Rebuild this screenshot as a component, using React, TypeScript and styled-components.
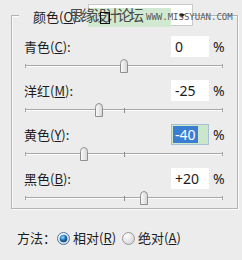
import React from 'react';
import styled, { createGlobalStyle } from 'styled-components';

const Global = createGlobalStyle`
  html, body { margin: 0; padding: 0; background: #ececec; }
  body {
    font-family: "Noto Sans CJK SC", "Noto Sans", sans-serif;
    font-size: 13px;
    color: #1c1c1c;
  }
`;

const Dialog = styled.div`
  position: relative;
  width: 242px;
  height: 260px;
  box-sizing: border-box;
  padding: 15px 4px 0 11px;
  background: #ececec;
  overflow: hidden;
`;

const GroupBox = styled.div`
  position: relative;
  width: 227px;
  height: 194px;
  box-sizing: border-box;
  border: 1px solid #b4b4b4;
  box-shadow: inset 1px 1px 0 #fbfbfb, 1px 1px 0 #fbfbfb;
  padding: 20px 12px 0 12px;
  display: flex;
  flex-direction: column;
  gap: 7px;
`;

const Legend = styled.div`
  position: absolute;
  top: -12px;
  left: 7px;
  height: 22px;
  display: flex;
  align-items: stretch;
`;

const LegendLabel = styled.div`
  width: 69px;
  box-sizing: border-box;
  padding: 5px 0 0 14px;
  background: #ececec;
  line-height: 16px;
  white-space: nowrap;
`;

const Dropdown = styled.div`
  position: relative;
  width: 105px;
  height: 22px;
  box-sizing: border-box;
  background: #fff;
  border: 1px solid #c9c9c9;
`;

const DropArrow = styled.div`
  position: absolute;
  right: 7px;
  top: 9px;
  width: 0;
  height: 0;
  border-left: 3px solid transparent;
  border-right: 3px solid transparent;
  border-top: 4px solid #222;
`;

const Block = styled.div`
  display: flex;
  flex-direction: column;
  gap: 2px;
`;

const Row = styled.div`
  display: flex;
  align-items: center;
  height: 21px;
`;

const Label = styled.div`
  flex: 1;
  line-height: 16px;
  white-space: nowrap;
`;

const ValueBox = styled.div<{ $focused?: boolean }>`
  width: 38px;
  height: 21px;
  box-sizing: border-box;
  background: ${p => (p.$focused ? '#cbe7cb' : '#ffffff')};
  border: 1px solid ${p => (p.$focused ? '#a9bfd6' : '#ffffff')};
  display: flex;
  align-items: center;
  padding: 0 0 0 ${p => (p.$focused ? '1px' : '3px')};
  font-size: 14px;
  line-height: 17px;
  font-family: "Noto Sans", "Liberation Sans", sans-serif;
  color: #1a1a1a;
`;

const Selected = styled.span`
  background: #3b7dd0;
  color: #fff;
  padding: 0 2px 0 2px;
  line-height: 17px;
`;

const Percent = styled.div`
  width: 12px;
  margin-left: 4px;
  font-family: "Noto Sans", "Liberation Sans", sans-serif;
  font-size: 14px;
  color: #222;
`;

const SliderArea = styled.div`
  position: relative;
  height: 14px;
  margin: 0 2px 0 1px;
`;

const Track = styled.div`
  position: absolute;
  left: 0;
  right: 0;
  top: 6px;
  height: 0;
  border-top: 1px solid #a8a8a8;
  border-bottom: 1px solid #fdfdfd;
  &::before, &::after {
    content: '';
    position: absolute;
    top: -2px;
    width: 1px;
    height: 4px;
    background: #a8a8a8;
  }
  &::before { left: 0; }
  &::after { right: 0; }
`;

const CenterTick = styled.div`
  position: absolute;
  left: 99px;
  top: 5px;
  width: 1px;
  height: 5px;
  background: #8c8c8c;
`;

const Thumb = styled.svg`
  position: absolute;
  top: 0;
  width: 8px;
  height: 14px;
`;

const MethodRow = styled.div`
  display: flex;
  align-items: center;
  height: 20px;
  margin: 19px 0 0 6px;
`;

const MethodLabel = styled.div`
  margin-right: 1px;
  line-height: 16px;
`;

const RadioOption = styled.div`
  display: flex;
  align-items: center;
  gap: 3px;
  margin-right: 6px;
  line-height: 16px;
`;

const Watermark = styled.div`
  position: absolute;
  pointer-events: none;
`;

const WmGreen = styled(Watermark)`
  left: 88px;
  top: 8px;
  width: 83px;
  height: 19px;
  background: #d0e9d0;
`;

const WmText = styled(Watermark)`
  left: 69px;
  top: 5px;
  font-size: 15px;
  letter-spacing: -3px;
  line-height: 19px;
  color: #4a4a4a;
  white-space: nowrap;
`;

const WmBox = styled(Watermark)`
  left: 100px;
  top: 12px;
  width: 10px;
  height: 12px;
  box-sizing: border-box;
  border: 1.5px solid #111;
`;

const WmUrl = styled(Watermark)`
  left: 146px;
  top: 12px;
  font-family: "DejaVu Sans Mono", monospace;
  font-size: 9px;
  line-height: 10px;
  color: #5a5a5a;
  white-space: nowrap;
`;

const SliderThumb: React.FC<{ left: number }> = ({ left }) => (
  <Thumb style={{ left }} viewBox="0 0 8 14">
    <defs>
      <linearGradient id="tg" x1="0" y1="0" x2="1" y2="0">
        <stop offset="0" stopColor="#fdfdfd" />
        <stop offset="1" stopColor="#d4d4d4" />
      </linearGradient>
    </defs>
    <path d="M0.5 13.5 V4.5 Q0.5 0.5 4 0.5 Q7.5 0.5 7.5 4.5 V13.5 Z" fill="url(#tg)" stroke="#8e8e8e" />
  </Thumb>
);

const RadioIcon: React.FC<{ checked?: boolean }> = ({ checked }) => (
  <svg width="13" height="13" viewBox="0 0 13 13">
    <defs>
      <radialGradient id="rOff" cx="0.35" cy="0.3" r="0.8">
        <stop offset="0" stopColor="#ffffff" />
        <stop offset="1" stopColor="#d0d0d0" />
      </radialGradient>
      <radialGradient id="rOn" cx="0.4" cy="0.35" r="0.7">
        <stop offset="0" stopColor="#8fe0ff" />
        <stop offset="0.55" stopColor="#1e6fb8" />
        <stop offset="1" stopColor="#0c3a6e" />
      </radialGradient>
    </defs>
    <circle cx="6.5" cy="6.5" r="6" fill="url(#rOff)" stroke={checked ? '#4a7aa8' : '#9a9a9a'} />
    {checked && <circle cx="6.5" cy="6.5" r="3.8" fill="url(#rOn)" />}
  </svg>
);

type Channel = { name: string; key: string; value: number; text: string; focused?: boolean };

const channels: Channel[] = [
  { name: '青色', key: 'C', value: 0, text: '0' },
  { name: '洋红', key: 'M', value: -25, text: '-25' },
  { name: '黄色', key: 'Y', value: -40, text: '-40', focused: true },
  { name: '黑色', key: 'B', value: 20, text: '+20' },
];

const TRACK = 198;

export default function App() {
  return (
    <>
      <Global />
      <Dialog>
        <GroupBox>
          <Legend>
            <LegendLabel>
              颜色(<u>O</u>):
            </LegendLabel>
            <Dropdown>
              <DropArrow />
            </Dropdown>
          </Legend>
          {channels.map(c => (
            <Block key={c.key}>
              <Row>
                <Label>
                  {c.name}(<u>{c.key}</u>):
                </Label>
                <ValueBox $focused={c.focused}>
                  {c.focused ? <Selected>{c.text}</Selected> : c.text}
                </ValueBox>
                <Percent>%</Percent>
              </Row>
              <SliderArea>
                <Track />
                <CenterTick />
                <SliderThumb left={Math.round(((c.value + 100) / 200) * TRACK) - 4} />
              </SliderArea>
            </Block>
          ))}
        </GroupBox>
        <MethodRow>
          <MethodLabel>方法：</MethodLabel>
          <RadioOption>
            <RadioIcon checked />
            <span>相对(<u>R</u>)</span>
          </RadioOption>
          <RadioOption>
            <RadioIcon />
            <span>绝对(<u>A</u>)</span>
          </RadioOption>
        </MethodRow>
        <WmGreen />
        <WmText>思缘设计论坛</WmText>
        <WmBox />
        <WmUrl>WWW.MISSYUAN.COM</WmUrl>
      </Dialog>
    </>
  );
}
